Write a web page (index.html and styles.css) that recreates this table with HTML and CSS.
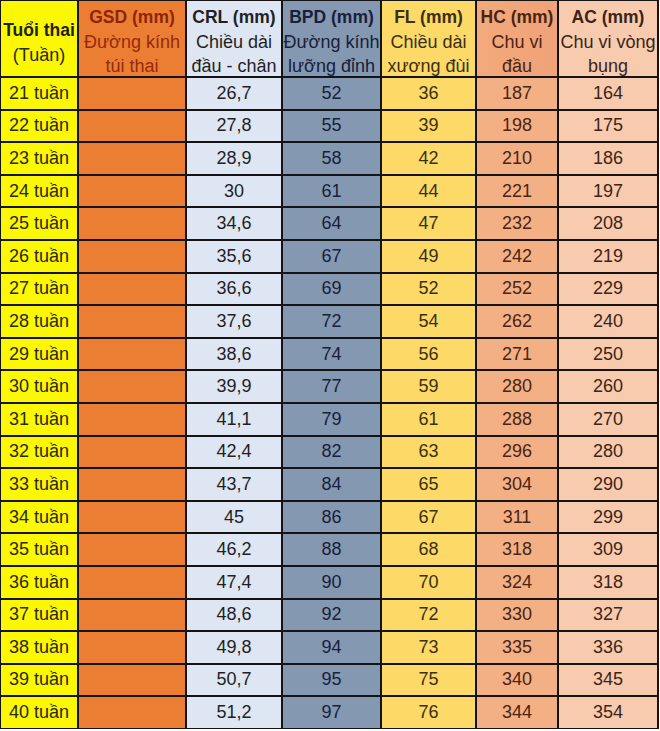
FILE: index.html
```html
<!DOCTYPE html>
<html lang="vi">
<head>
<meta charset="utf-8">
<link rel="stylesheet" href="styles.css">
</head>
<body>
<div class="grid" id="grid">
  <div class="cell c1 head head2"><b>Tuổi thai</b><span>(Tuần)</span></div>
  <div class="cell c2 head"><b>GSD (mm)</b><span>Đường kính</span><span>túi thai</span></div>
  <div class="cell c3 head"><b>CRL (mm)</b><span>Chiều dài</span><span>đầu - chân</span></div>
  <div class="cell c4 head"><b>BPD (mm)</b><span>Đường kính</span><span>lưỡng đỉnh</span></div>
  <div class="cell c5 head"><b>FL (mm)</b><span>Chiều dài</span><span>xương đùi</span></div>
  <div class="cell c6 head"><b>HC (mm)</b><span>Chu vi</span><span>đầu</span></div>
  <div class="cell c7 head"><b>AC (mm)</b><span>Chu vi vòng</span><span>bụng</span></div>
</div>
<script src="app.js"></script>
</body>
</html>
```
FILE: app.js
```js
const rows = [
  [21,"26,7",52,36,187,164],[22,"27,8",55,39,198,175],[23,"28,9",58,42,210,186],
  [24,"30",61,44,221,197],[25,"34,6",64,47,232,208],[26,"35,6",67,49,242,219],
  [27,"36,6",69,52,252,229],[28,"37,6",72,54,262,240],[29,"38,6",74,56,271,250],
  [30,"39,9",77,59,280,260],[31,"41,1",79,61,288,270],[32,"42,4",82,63,296,280],
  [33,"43,7",84,65,304,290],[34,"45",86,67,311,299],[35,"46,2",88,68,318,309],
  [36,"47,4",90,70,324,318],[37,"48,6",92,72,330,327],[38,"49,8",94,73,335,336],
  [39,"50,7",95,75,340,345],[40,"51,2",97,76,344,354]
];
const g = document.getElementById('grid');
for (const r of rows) {
  const vals = [r[0] + " tuần", "", r[1], r[2], r[3], r[4], r[5]];
  vals.forEach((v, i) => {
    const d = document.createElement('div');
    d.className = 'cell c' + (i + 1);
    d.textContent = v;
    g.appendChild(d);
  });
}
```
FILE: styles.css
```css
html, body { margin: 0; padding: 0; background: #fff; }
body { font-family: "Liberation Sans", Arial, sans-serif; }
.grid {
  display: grid;
  width: 659px;
  box-sizing: border-box;
  grid-template-columns: 76px 106px 94px 97px 93px 80px 98px;
  grid-template-rows: 75px repeat(20, 30.6px);
  gap: 2px;
  padding: 1px 2px 1px 1px;
  background: #141414;
}
.cell {
  display: flex;
  align-items: center;
  justify-content: center;
  font-size: 18px;
  color: #222;
}
.head {
  flex-direction: column;
  justify-content: flex-start;
  padding-top: 4px;
  line-height: 24.5px;
  text-align: center;
  white-space: nowrap;
}
.head2 { padding-top: 17px; }
.head b { font-size: 17.5px; font-weight: bold; }
.c1 { background: #fbf705; color: #2a2a10; }
.c2 { background: #ec7e33; color: #962a0c; }
.c3 { background: #dde6f2; color: #1f1f24; }
.c4 { background: #8598b2; color: #18203a; }
.c5 { background: #fdd967; color: #3a3015; }
.c6 { background: #f3b084; color: #4a2414; }
.c7 { background: #f8cbae; color: #3b2418; }
.c1.head b { color: #1f1f05; }
.c2.head b { color: #8e2509; }
.c6.head { background: linear-gradient(to right, #f3a97b, #f0a278); }
```
